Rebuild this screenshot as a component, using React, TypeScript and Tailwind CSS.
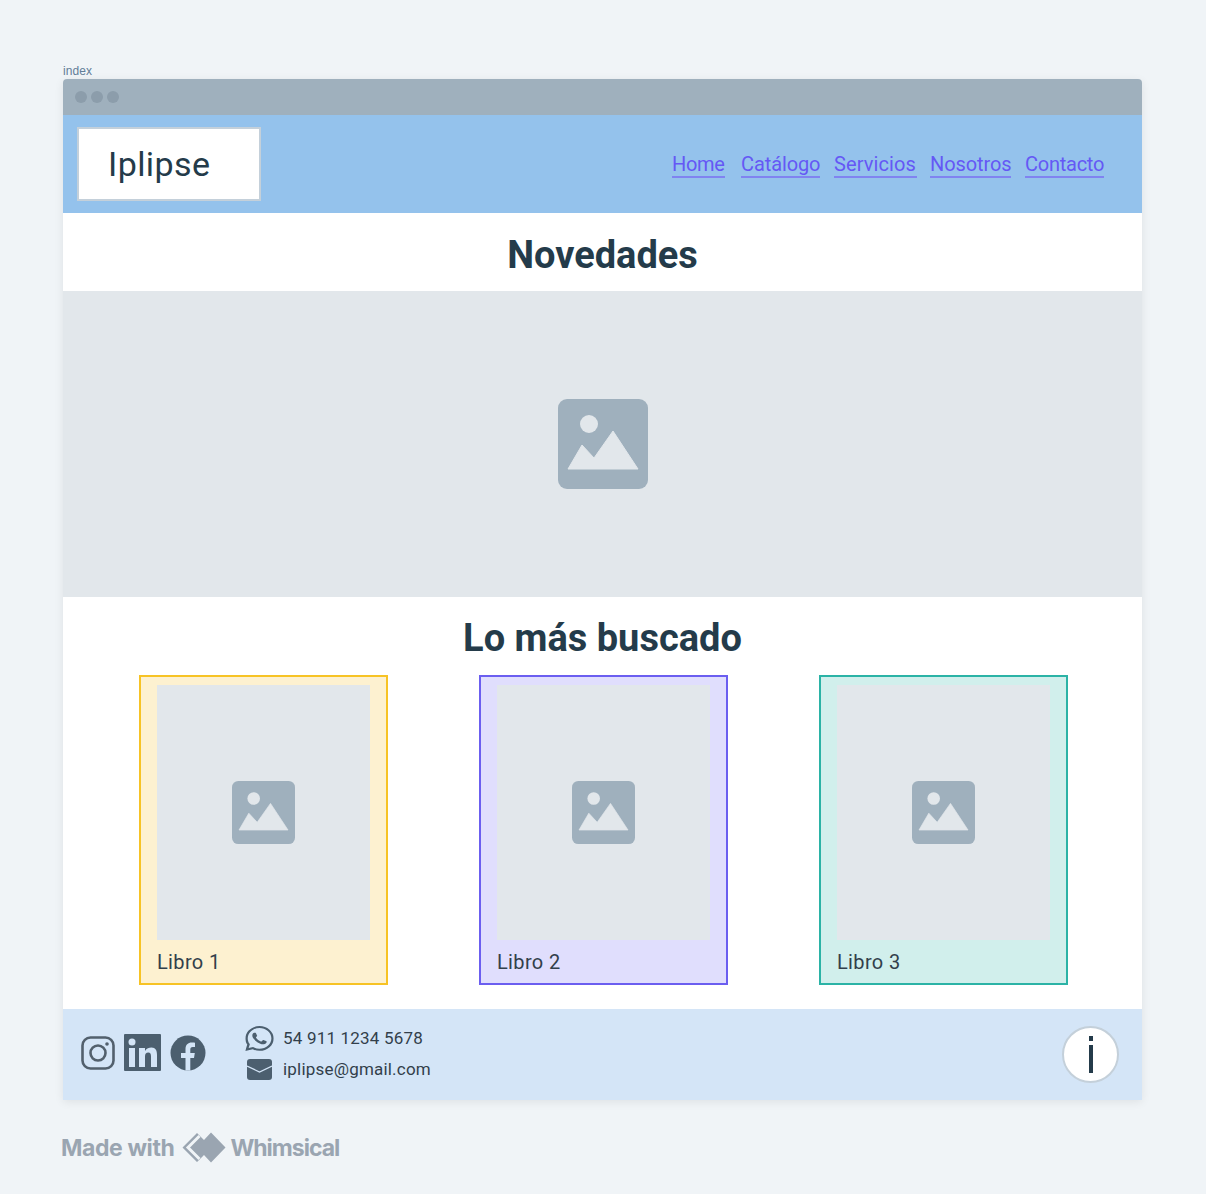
import { FaWhatsapp } from "react-icons/fa";

function ImageIcon({ className }: { className: string }) {
  return (
    <svg viewBox="0 0 90 90" className={className}>
      <rect width="90" height="90" rx="9" fill="#9fb0bd" />
      <circle cx="31" cy="25" r="9" fill="#e2e7eb" />
      <path d="M10 70 L24 46 L36 59 L55 32 L80 70 Z" fill="#e2e7eb" stroke="#e2e7eb" strokeWidth="1" strokeLinejoin="round" />
    </svg>
  );
}

function Book({ title, cls }: { title: string; cls: string }) {
  return (
    <div className={`w-[249px] h-[310px] border-2 px-4 pt-2 ${cls}`}>
      <div className="h-[255px] w-[213px] bg-[#e2e7eb] flex items-center justify-center">
        <ImageIcon className="w-[63px] h-[63px]" />
      </div>
      <div className="mt-[10px] text-[20px] leading-[24px] tracking-[0.35px] text-[#323f4b]">{title}</div>
    </div>
  );
}

function Link({ children, cls }: { children: string; cls: string }) {
  return (
    <span className={`text-[20px] leading-[24px] text-left whitespace-nowrap text-[#6558f5] border-b-2 border-[#8083f0] ${cls}`}>{children}</span>
  );
}

export default function App() {
  return (
    <div className="min-h-[1194px] bg-[#f0f4f7] pt-[64px] px-[63px] font-['Roboto',sans-serif] text-[#243b4a]">
      <div className="h-[15px] text-[12px] leading-[14px] tracking-[0.1px] text-[#627d98] font-['Liberation_Sans',sans-serif]">index</div>
      <div className="w-[1079px] shadow-[0_2px_10px_rgba(0,0,0,0.08)] rounded-t-[4px] overflow-hidden">
        <div className="h-[36px] bg-[#9fb0bd] flex items-center gap-[4px] pl-[12px]">
          <span className="w-3 h-3 rounded-full bg-[#8c9dab]" />
          <span className="w-3 h-3 rounded-full bg-[#8c9dab]" />
          <span className="w-3 h-3 rounded-full bg-[#8c9dab]" />
        </div>
        <div className="h-[98px] bg-[#94c2ec] flex items-center justify-between pl-[14px] pr-[38px]">
          <div className="w-[184px] h-[74px] bg-white border-2 border-[#c4d0da] flex items-center pl-[29px] text-[34px] tracking-[0.4px]">Iplipse</div>
          <div className="flex items-center pt-[2px]">
            <Link cls="w-[53px] tracking-[-0.3px]">Home</Link>
            <Link cls="w-[79px] ml-[16px] tracking-[-0.1px]">Catálogo</Link>
            <Link cls="w-[83px] ml-[14px] tracking-[0.1px]">Servicios</Link>
            <Link cls="w-[81px] ml-[13px] tracking-[-0.1px]">Nosotros</Link>
            <Link cls="w-[79px] ml-[14px] tracking-[-0.25px]">Contacto</Link>
          </div>
        </div>
        <div className="h-[78px] pt-[6px] bg-white flex items-center justify-center text-[38px] font-bold">Novedades</div>
        <div className="h-[306px] bg-[#e2e7eb] flex items-center justify-center">
          <ImageIcon className="w-[90px] h-[90px]" />
        </div>
        <div className="h-[78px] pt-[5px] bg-white flex items-center justify-center text-[38px] font-bold">Lo más buscado</div>
        <div className="bg-white h-[334px] pl-[76px] flex gap-[91px]">
          <Book title="Libro 1" cls="bg-[#fdf1d0] border-[#f7c325]" />
          <Book title="Libro 2" cls="bg-[#e0defd] border-[#6b5ef0]" />
          <Book title="Libro 3" cls="bg-[#d1efec] border-[#2bb3a6]" />
        </div>
        <div className="h-[91px] bg-[#d4e5f7] flex items-center pl-[18px] pr-[23px]">
          <div className="flex items-center -mt-[4px]">
            <svg viewBox="0 0 34 34" className="w-[34px] h-[34px]" fill="none" stroke="#52606d">
              <rect x="1.5" y="1.5" width="31" height="31" rx="8" strokeWidth="2.6" />
              <circle cx="17" cy="17" r="7.5" strokeWidth="2.6" />
              <circle cx="26" cy="8" r="1.8" fill="#52606d" stroke="none" />
            </svg>
            <svg viewBox="0 0 37 37" className="w-[37px] h-[37px] ml-[9px]">
              <rect width="37" height="37" rx="1" fill="#4c5f6f" />
              <rect x="5" y="14" width="6" height="19" fill="#d4e5f7" />
              <circle cx="8" cy="8" r="3.5" fill="#d4e5f7" />
              <path d="M15 14 H21 V17 C22.5 14.6 25 13.6 27.5 13.6 C31.5 13.6 33 16.5 33 21 V33 H27 V22.5 C27 19.8 26.3 18.6 24.3 18.6 C22 18.6 21 20 21 22.5 V33 H15 Z" fill="#d4e5f7" />
            </svg>
            <svg viewBox="0 0 36 36" className="w-[36px] h-[36px] ml-[9px]">
              <circle cx="18" cy="18" r="17.5" fill="#4c5f6f" />
              <path d="M15.5 35.5 V23 H11 V18 H15.5 V14 C15.5 9.8 18 7.5 21.8 7.5 C23.5 7.5 25 7.7 25 7.7 V12 H22.8 C20.8 12 20.3 13.2 20.3 14.4 V18 H24.8 L24 23 H20.3 V35.5 Z" fill="#d4e5f7" />
            </svg>
          </div>
          <div className="ml-[41px] -mt-[3px] flex flex-col gap-[8px] text-[17px] text-[#323f4b]">
            <div className="flex items-center h-[25px] gap-[11px]">
              <FaWhatsapp className="w-[25px] h-[29px] scale-x-[1.14] text-[#4c5f6f]" />
              <span className="tracking-[0.2px]">54 911 1234 5678</span>
            </div>
            <div className="flex items-center h-[21px] gap-[11px]">
              <svg viewBox="0 0 25 21" className="w-[25px] h-[21px]">
                <rect width="25" height="21" rx="3" fill="#4c5f6f" />
                <path d="M0 7 L12.5 13 L25 7" fill="none" stroke="#d4e5f7" strokeWidth="1.3" />
              </svg>
              <span className="tracking-[0.2px]">iplipse@gmail.com</span>
            </div>
          </div>
          <div className="ml-auto w-[57px] h-[57px] rounded-full bg-white border-2 border-[#c4d0da] flex flex-col items-center justify-center gap-[4px]">
            <span className="w-[4px] h-[5px] bg-[#243b4a]" />
            <span className="w-[4px] h-[28px] bg-[#243b4a]" />
          </div>
        </div>
      </div>
      <div className="mt-[31px] -ml-[2px] flex items-center text-[#9aa5b1] font-bold text-[23px] font-['Inter',sans-serif] tracking-[-0.4px]">
        <span>Made with</span>
        <svg viewBox="0 0 44 32" className="w-[44px] h-[32px] ml-[8px]">
          <path d="M15 1 L22 8 L29 0.5 L43.5 15.5 L29 30.5 L22 23 L15 30 L0.5 15.5 Z" fill="#9aa5b1" strokeLinejoin="round" />
          <path d="M17.5 4 L6 15.5 L17.5 27" fill="none" stroke="#f0f4f7" strokeWidth="3" />
        </svg>
        <span className="ml-[4px] tracking-[-1px]">Whimsical</span>
      </div>
    </div>
  );
}
